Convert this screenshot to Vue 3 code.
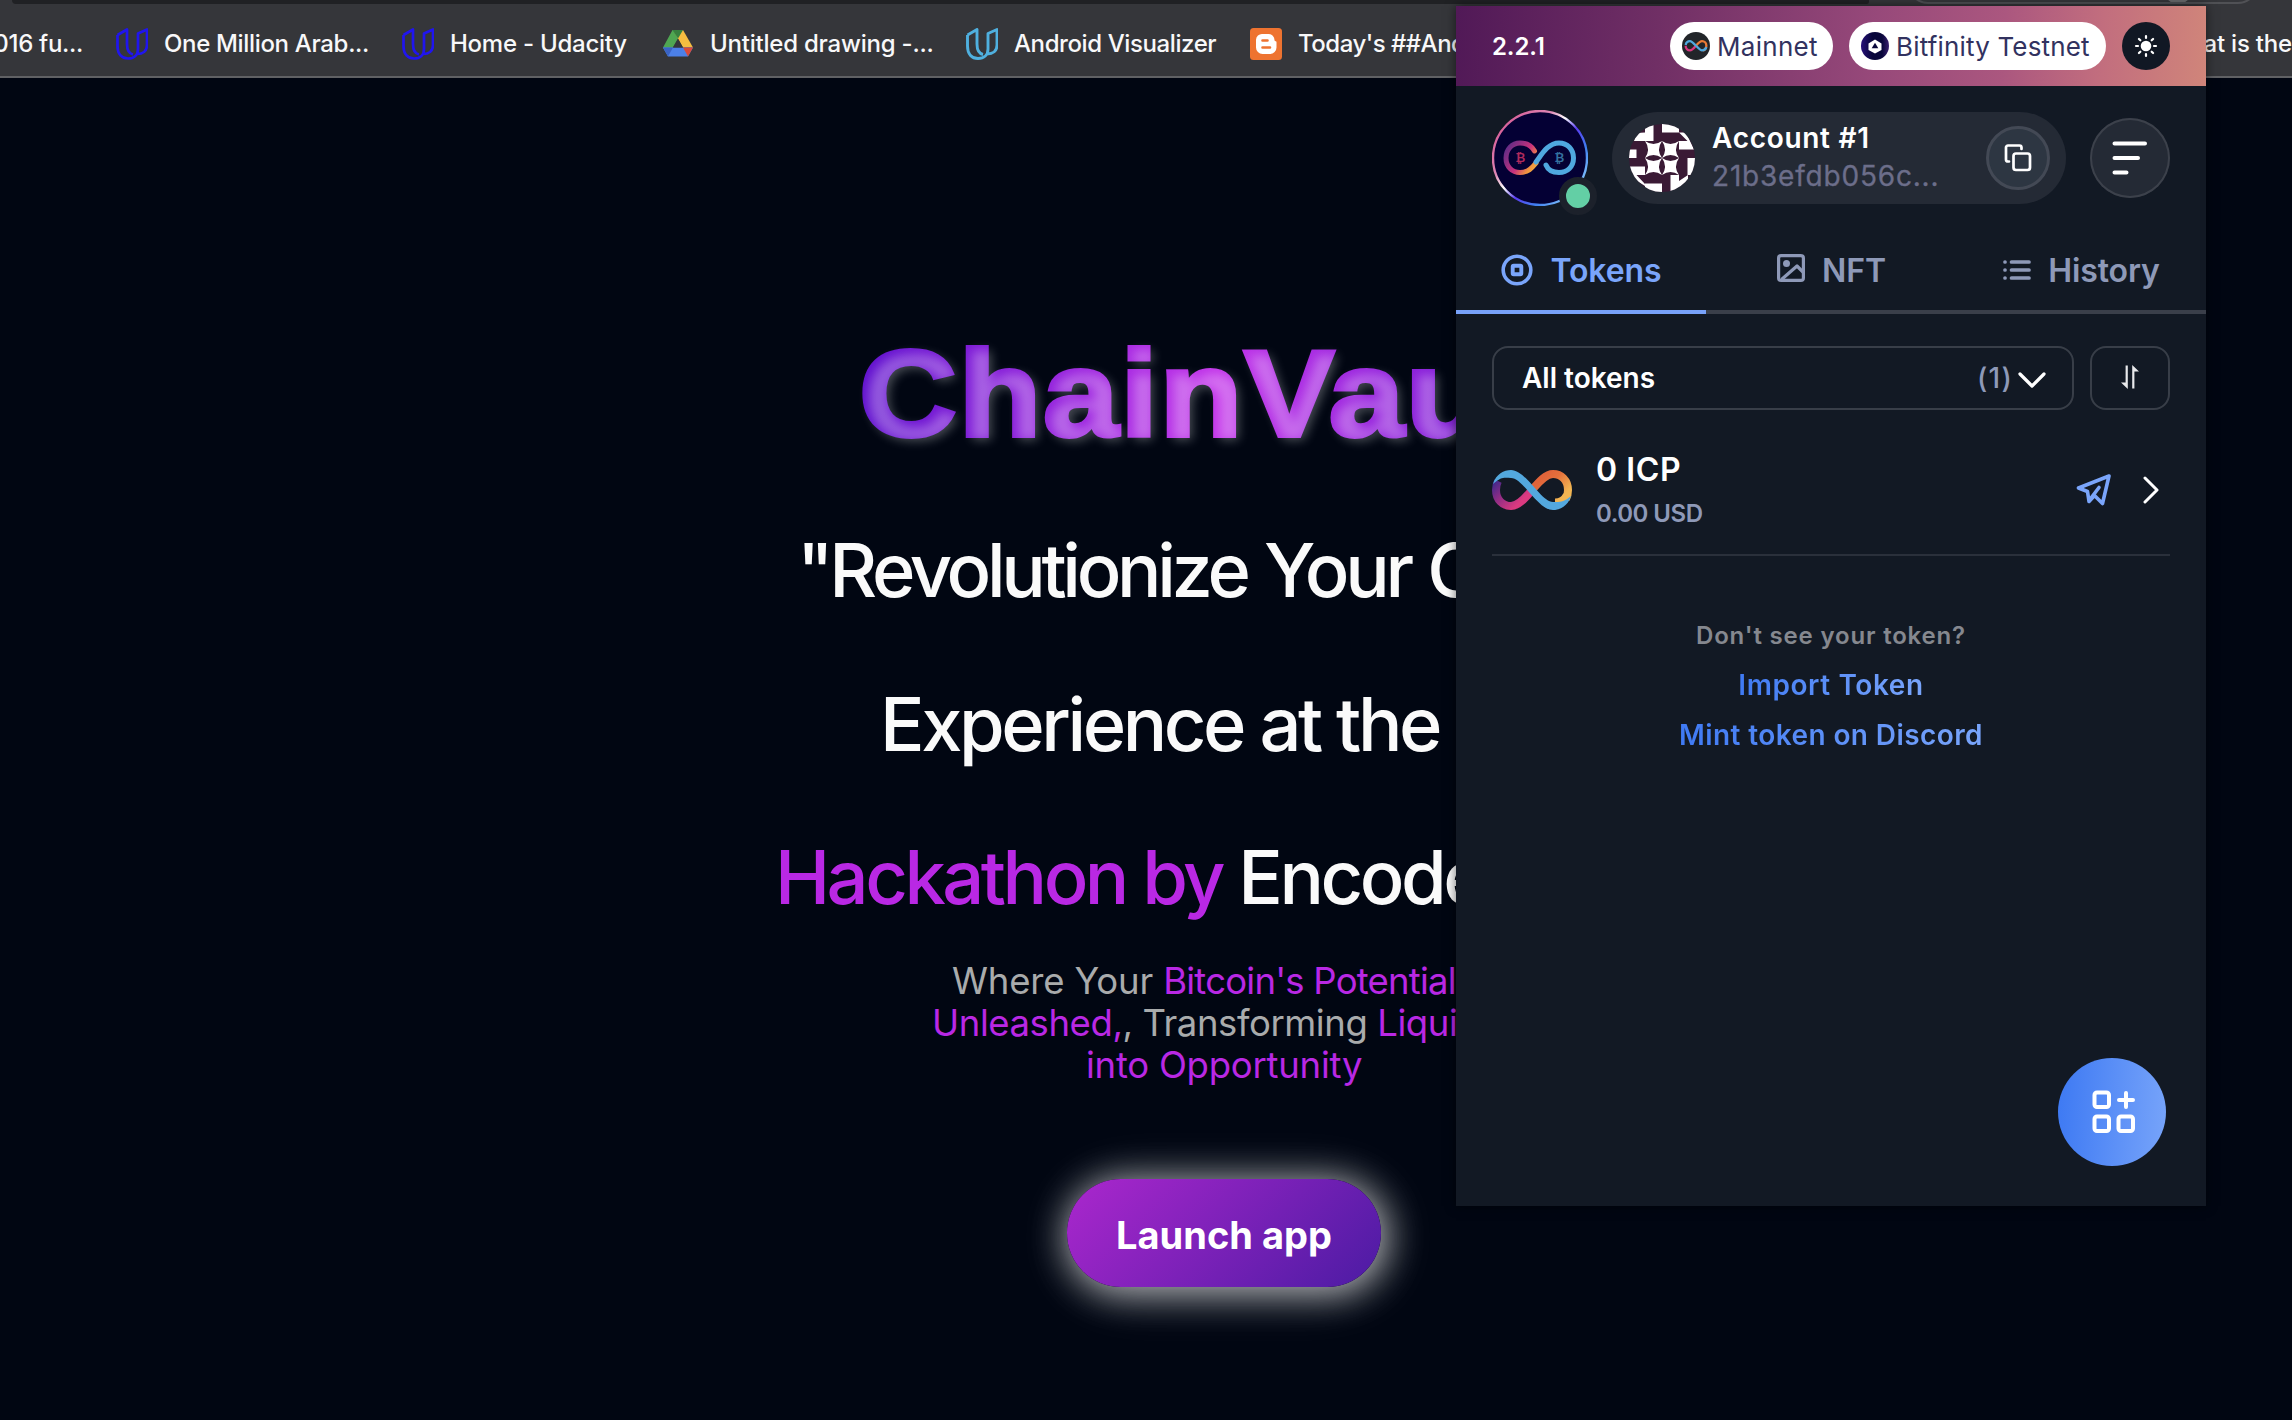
<script setup>
const stars = [[17, 17], [34, 17], [17, 34], [34, 34]]
const rays = [0, 45, 90, 135, 180, 225, 270, 315]
</script>

<template>
  <div class="screen">
    <nav class="bookmarks">
      <div class="tabstrip"></div>
      <div class="omnibox"><i></i></div>
      <div class="mark first"><span>016 fu...</span></div>
      <div class="mark m1">
        <svg class="ic" viewBox="0 0 32 32" fill="none" stroke="#2015ee" stroke-width="2.7" stroke-linejoin="round"><path d="M1.5 7 L11 1.5 V16 C11 22 12.5 25.5 17 26.5 M1.5 7 V18 C1.5 26.5 6 30.5 12 30.5 C18 30.5 22 27 22 21 V5.5 L31 1.5 V17 C31 23 27 26 21 26"/></svg>
        <span>One Million Arab...</span>
      </div>
      <div class="mark m2">
        <svg class="ic" viewBox="0 0 32 32" fill="none" stroke="#2015ee" stroke-width="2.7" stroke-linejoin="round"><path d="M1.5 7 L11 1.5 V16 C11 22 12.5 25.5 17 26.5 M1.5 7 V18 C1.5 26.5 6 30.5 12 30.5 C18 30.5 22 27 22 21 V5.5 L31 1.5 V17 C31 23 27 26 21 26"/></svg>
        <span>Home - Udacity</span>
      </div>
      <div class="mark m3">
        <svg class="drive" viewBox="0 0 30 27">
          <path d="M9.5 0 H20 L15 8.5 L5 26 L0 17.5 Z" fill="#4fa652"/>
          <path d="M20 0 L30 17.5 H20 L11 1.5 Z" fill="#f5bd41"/><path d="M9.5 0 H20 L15 8.5 Z" fill="#37803f"/>
          <path d="M0 17.5 H30 L25 26.5 H5 Z" fill="#4c80e8"/><path d="M20 17.5 H30 L25 26.5 Z" fill="#da4a3a"/><path d="M0 17.5 H10 L5 26.5 Z" fill="#3a63c4"/>
          <path d="M15 8.8 L20 17.5 H10 Z" fill="#35363a"/>
        </svg>
        <span>Untitled drawing -...</span>
      </div>
      <div class="mark m4">
        <svg class="ic" viewBox="0 0 32 32" fill="none" stroke="#4fb0df" stroke-width="2.9" stroke-linejoin="round"><path d="M1.5 7 L11 1.5 V16 C11 22 12.5 25.5 17 26.5 M1.5 7 V18 C1.5 26.5 6 30.5 12 30.5 C18 30.5 22 27 22 21 V5.5 L31 1.5 V17 C31 23 27 26 21 26"/></svg>
        <span>Android Visualizer</span>
      </div>
      <div class="mark m5">
        <svg class="ic" viewBox="0 0 32 32"><rect width="32" height="32" rx="3.5" fill="#ee7330"/><path d="M12.5 6 h6 a6 6 0 0 1 6 6 q0 1.3 1.3 1.3 q.7 0 .7 1 v5.200 a6.500 6.500 0 0 1 -6.500 6.500 h-7.500 a6.500 6.500 0 0 1 -6.500 -6.500 v-7.500 a6 6 0 0 1 6.500 -6z" fill="#fff"/><path d="M12.500 12.500 h5 M12.500 19.500 h7.500" stroke="#ee7330" stroke-width="2.600" stroke-linecap="round"/></svg>
        <span>Today's ##And</span>
      </div>
      <div class="mark last"><span>at is the</span></div>
    </nav>

    <main class="hero">
      <h1><span>ChainVault</span></h1>
      <div class="headline">
        <p class="h-a">"Revolutionize Your C</p>
        <p class="h-b">Experience at the</p>
        <p class="h-c"><em>Hackathon by</em> Encode</p>
      </div>
      <div class="lead">
        <p class="l-a">Where Your <em>Bitcoin's Potential</em></p>
        <p class="l-b"><em>Unleashed,</em>, Transforming <em>Liquid</em></p>
        <p class="l-c"><em>into Opportunity</em></p>
      </div>
      <button class="launch">Launch app</button>
    </main>

    <section class="wallet">
      <header class="net">
        <span class="ver">2.2.1</span>
        <span class="pill main">
          <svg viewBox="0 0 28 28"><circle cx="14" cy="14" r="14" fill="#222529"/><g fill="none" stroke-width="8" transform="translate(2.500 8) scale(.2875)"><path d="M4 20C4 30 11 36 19 36 26 36 34 27 40 20" stroke="#d8377f"/><path d="M40 20C46 13 54 4 61 4 69 4 76 10 76 20 76 30 69 36 64 36" stroke="#ea7a35"/><path d="M4 17C6 8 12 4 19 4 30 4 50 36 61 36 68 36 74 32 76 25" stroke="#4fa8df"/></g></svg>
          <span>Mainnet</span>
        </span>
        <span class="pill bit">
          <svg viewBox="0 0 28 28"><defs><linearGradient id="bt"><stop offset="0" stop-color="#27107a"/><stop offset=".4" stop-color="#08063a"/><stop offset=".75" stop-color="#08063a"/><stop offset="1" stop-color="#3a2070"/></linearGradient></defs><circle cx="14" cy="14" r="14" fill="url(#bt)"/><path d="M14 7.500 L20.500 11.500 V18 L14 21.500 L7.500 18 V11.500Z" fill="#fff"/><path d="M14 10.800 L17.300 16.300 H10.700Z" fill="#08063a"/></svg>
          <span>Bitfinity Testnet</span>
        </span>
        <span class="sun">
          <svg viewBox="0 0 48 48"><circle cx="24" cy="24" r="5.300" fill="#fff"/><path v-for="a in rays" :key="a" d="M24 14 V16" :transform="`rotate(${a} 24 24)`" stroke="#fff" stroke-width="2.200" stroke-linecap="round"/></svg>
        </span>
      </header>

      <div class="account-row">
        <div class="avatar">
          <svg viewBox="0 0 96 96">
            <defs>
              <linearGradient id="av" x1=".05" y1=".25" x2=".85" y2=".95"><stop offset="0" stop-color="#d8649c"/><stop offset=".25" stop-color="#dd86b4"/><stop offset=".4" stop-color="#fff"/><stop offset=".55" stop-color="#5a3bf0"/><stop offset=".75" stop-color="#3f7ff0"/><stop offset="1" stop-color="#8fd0ff"/></linearGradient>
              <linearGradient id="al" gradientUnits="userSpaceOnUse" x1="13" y1="36" x2="46" y2="58"><stop offset="0" stop-color="#5a2b86"/><stop offset=".55" stop-color="#c9327c"/><stop offset=".82" stop-color="#f0933f"/><stop offset="1" stop-color="#f4b23f"/></linearGradient>
            </defs>
            <circle cx="48" cy="48" r="47" fill="#040034" stroke="url(#av)" stroke-width="2.400"/>
            <g fill="none" stroke-width="5" stroke-linecap="round">
              <path d="M42.500 41 C39 34.500 34 33 28 33 C20 33 14 39.500 14 48 C14 56.500 20 62.500 28 62.500 C36 62.500 40 58 44 53" stroke="url(#al)"/>
              <path d="M44 52 C50 44 56 33 67 33 C75.500 33 81.500 39.500 81.500 48 C81.500 56.500 75.500 62.500 67 62.500 C60 62.500 56 60 54 55" stroke="#4fa8df"/>
            </g>
            <text x="28.500" y="51.800" class="coin" fill="#b02a5c">₿</text><text x="67.500" y="51.800" class="coin" fill="#34709e">₿</text>
          </svg>
          <i class="dot"></i>
        </div>
        <div class="account">
          <svg class="ident" viewBox="0 0 68 68">
            <clipPath id="cc"><ellipse cx="34" cy="34" rx="33" ry="34"/></clipPath>
            <g clip-path="url(#cc)">
              <rect width="68" height="68" fill="#3a1a35"/>
              <path fill="#fff" d="M17 0H25.500V17H6L8.500 9 17 8.500ZM34 0H51V8.500H34ZM51 8.500 58 8.500 66 25.500H51V17H59.500ZM59.500 34H68V51H59.500ZM42.500 51H51V57L60 51V62L48 68H42.500ZM17 59.500H34V68H17ZM0 42.500H17V51H8.500L17 60V62L0 51ZM0 25.500H8.500V34H0Z"/>
              <path v-for="([x, y], i) in stars" :key="i" fill="#fff" :transform="`translate(${x} ${y})`" d="M0 0 Q8.500 6 17 0 Q11 8.500 17 17 Q8.500 11 0 17 Q6 8.500 0 0Z"/>
            </g>
          </svg>
          <div class="who"><b>Account #1</b><span>21b3efdb056c...</span></div>
          <span class="copy">
            <svg viewBox="0 0 30 30" fill="none" stroke="#fff" stroke-width="2.700" stroke-linejoin="round" stroke-linecap="round"><rect x="10.500" y="10.500" width="16.500" height="16.500" rx="2.500"/><path d="M6 18.500 H5 a2 2 0 0 1 -2 -2 V4.500 a2 2 0 0 1 2 -2 H16.500 a2 2 0 0 1 2 2 V6"/></svg>
          </span>
        </div>
        <span class="menu"><svg viewBox="0 0 80 80" stroke="#fff" stroke-width="4" stroke-linecap="round"><path d="M24.500 25.500 H55 M24.500 40 H48 M24.500 54.500 H36.500"/></svg></span>
      </div>

      <div class="tabs">
        <div class="tab on">
          <svg class="t1" viewBox="0 0 32 32" fill="none" stroke="currentColor"><circle cx="16" cy="16" r="13.800" stroke-width="3.600"/><rect x="11.700" y="11.700" width="8.600" height="8.600" rx="1" stroke-width="3.900"/></svg>
          <span>Tokens</span>
        </div>
        <div class="tab">
          <svg class="t2" viewBox="0 0 28 28" fill="none" stroke="currentColor" stroke-width="3.200" stroke-linejoin="round"><rect x="1.600" y="1.600" width="24.800" height="24.800" rx="2.500"/><circle cx="9.500" cy="9.500" r="3.500" fill="currentColor" stroke="none"/><path d="M4.500 25.500 L20 12 L26 18"/></svg>
          <span>NFT</span>
        </div>
        <div class="tab">
          <svg class="t3" viewBox="0 0 28 22" stroke="currentColor" stroke-width="3.700" stroke-linecap="round"><path d="M8.500 3 H26 M8.500 11 H26 M8.500 19 H26"/><path d="M2 3 h.01 M2 11 h.01 M2 19 h.01"/></svg>
          <span>History</span>
        </div>
      </div>

      <div class="filters">
        <div class="select">
          <b>All tokens</b>
          <span class="count">(1)</span>
          <svg viewBox="0 0 28 16" fill="none" stroke="#fff" stroke-width="3.200" stroke-linecap="round" stroke-linejoin="round"><path d="M2 2 L14 14 L26 2"/></svg>
        </div>
        <div class="sort"><svg viewBox="0 0 18 24" fill="#e8e9eb"><path d="M4.600 .5 H6.800 V24 L0 17.500 H4.600Z M11.200 23.500 H13.400 V6.500 H18 L11.200 0Z"/></svg></div>
      </div>

      <div class="token">
        <svg class="icp" viewBox="0 0 80 40" fill="none" stroke-width="8">
          <defs>
            <linearGradient id="g1" gradientUnits="userSpaceOnUse" x1="4" y1="12" x2="26" y2="34"><stop offset="0" stop-color="#48298a"/><stop offset=".4" stop-color="#8b2c85"/><stop offset="1" stop-color="#db3a80"/></linearGradient>
            <linearGradient id="g2" gradientUnits="userSpaceOnUse" x1="52" y1="6" x2="76" y2="30"><stop offset="0" stop-color="#e1643a"/><stop offset=".3" stop-color="#e5713c"/><stop offset=".8" stop-color="#f2b552"/></linearGradient>
          </defs>
          <path d="M6 11C4 15 4 18 4 20 4 30 11 36 19 36 27 36 34 27 40 20" stroke="url(#g1)"/>
          <path d="M40 20C46 13 53 4 61 4 69 4 76 10 76 20 76 25 75 27 74 29" stroke="url(#g2)"/>
          <path d="M63 32.500C70 32.500 73 29 75 25" stroke="url(#g2)"/>
          <path d="M1 14C4 4 12 0 19 0 34 0 49 32 61 32 67 32 71 33 79 26 76 36 68 40 61 40 46 40 31 8 19 8 13 8 10 6 1 14Z" fill="#53a8de"/>
        </svg>
        <div class="amount"><b>0 ICP</b><span>0.00 USD</span></div>
        <svg class="send" viewBox="0 0 36 32" fill="none" stroke="#7aa5fb" stroke-width="3.600" stroke-linejoin="round" stroke-linecap="round"><path d="M33 2 L2.500 14 L11.500 17.500 L13 27.500 L18.500 21.500 L26.500 29.500 Z"/><path d="M23 13.500 L13.500 26"/></svg>
        <svg class="go" viewBox="0 0 16 28" fill="none" stroke="#fff" stroke-width="3" stroke-linecap="round" stroke-linejoin="round"><path d="M2 2 L14 14 L2 26"/></svg>
      </div>

      <div class="more">
        <span class="ask">Don't see your token?</span>
        <a>Import Token</a>
        <a class="mint">Mint token on Discord</a>
      </div>

      <div class="fab"><svg viewBox="0 0 44 44" fill="none" stroke="#fff" stroke-width="4" stroke-linecap="round"><rect x="2.500" y="2.500" width="14.500" height="14.500" rx="2.500"/><rect x="2.500" y="26.500" width="14.500" height="14.500" rx="2.500"/><rect x="26.500" y="26.500" width="14.500" height="14.500" rx="2.500"/><path d="M34 3 V17 M27 10 H41"/></svg></div>
    </section>
  </div>
</template>

<style>
body { margin: 0; background: #010612; overflow: hidden; }
</style>
<style scoped>
.screen { position: relative; width: 2292px; height: 1420px; overflow: hidden; background: #010612; font-family: Inter, sans-serif; }
.screen * { box-sizing: border-box; }
svg { display: block; flex: none; }
em { font-style: normal; color: #b928e4; }
p, h1 { margin: 0; white-space: nowrap; }

.bookmarks { position: relative; height: 78px; background: #35363a; border-bottom: 2px solid #606164; display: grid; grid-template-columns: 116px 286px 261px 303px 284px 1fr 100px; align-items: center; padding-top: 11px; color: #f8f8f9; font-size: 24px; font-weight: 500; white-space: nowrap; }
.tabstrip { position: absolute; left: 12px; top: 0; width: 1857px; height: 4px; background: #202124; border-radius: 0 0 8px 14px; }
.omnibox { position: absolute; left: 1908px; top: -36px; width: 350px; height: 40px; border: 2px solid #505155; border-radius: 20px; overflow: hidden; }
.omnibox i { position: absolute; left: 254px; bottom: -2px; width: 28px; height: 28px; border-radius: 50%; background: #67686b; }
.mark { display: flex; align-items: center; height: 32px; line-height: 32px; }
.ic { width: 32px; height: 32px; margin-right: 16px; }
.first { justify-content: flex-end; padding-right: 33px; letter-spacing: -.3px; }
.m1 span { letter-spacing: -.33px; }
.m2 span { letter-spacing: -.25px; }
.m3 span { letter-spacing: -.22px; }
.m4 span { letter-spacing: -.4px; }
.m5 span { letter-spacing: -.5px; }
.drive { width: 30px; height: 27px; margin-right: 17px; }
.last { justify-content: flex-end; letter-spacing: -.2px; }

.hero { padding-top: 216px; color: #fafafa; }
h1 { margin-left: 859px; height: 200px; line-height: 200px; font-family: "Liberation Sans", sans-serif; font-size: 122px; font-weight: 700; }
h1 span { display: inline-block; letter-spacing: 1.6px; transform: scaleX(1.11); transform-origin: 0 50%; background: linear-gradient(90deg, #5f0fce, #c334ea 50%, #5f0fce); -webkit-background-clip: text; background-clip: text; color: transparent; -webkit-text-stroke: 4px transparent; text-shadow: 4px 4px 10px rgba(255, 255, 255, .3); }
.headline { font-size: 74px; font-weight: 500; line-height: 153.6px; }
.h-a { padding-left: 797px; letter-spacing: -4.3px; word-spacing: 2px; }
.h-b { padding-left: 880px; letter-spacing: -3.43px; }
.h-c { padding-left: 775px; letter-spacing: -3.48px; }
.lead { margin-top: 5px; font-size: 36.5px; line-height: 42.2px; color: #a9abac; }
.l-a { padding-left: 952px; letter-spacing: -.16px; }
.l-a em { letter-spacing: -.78px; }
.l-b { padding-left: 932px; letter-spacing: -.42px; }
.l-c { padding-left: 1086px; letter-spacing: -.24px; }
.launch { display: block; margin: 93px 0 0 1067px; width: 314px; height: 108px; padding: 4px 0 0; border: 0; border-radius: 54px; background: linear-gradient(135deg, #ab27cd, #4b1ba3); color: #fff; font: 700 38px Inter, sans-serif; box-shadow: 4px 4px 60px rgba(255, 255, 255, .2), 3px 4px 36px 3px rgba(255, 255, 255, .65); }

.wallet { position: absolute; left: 1456px; top: 6px; width: 750px; height: 1200px; background: #121924; box-shadow: 0 0 10px rgba(0, 0, 0, .55); }
.net { height: 80px; padding: 0 36px; display: flex; align-items: center; background: linear-gradient(93deg, #511957, #702f65 27%, #97497a 56%, #ab577f 73%, #c26e7e 86%, #d0857a); color: #fff; }
.ver { font-size: 24px; font-weight: 600; letter-spacing: -.1px; margin-right: auto; }
.pill { display: flex; align-items: center; height: 48px; border-radius: 24px; background: #fff; color: #32325f; font-size: 26px; padding-left: 12px; gap: 7px; white-space: nowrap; }
.pill svg { width: 28px; height: 28px; }
.main { width: 163px; letter-spacing: .29px; margin-right: 16px; }
.bit { width: 257px; letter-spacing: .17px; margin-right: 16px; }
.sun { width: 48px; height: 48px; border-radius: 50%; background: #111824; }
.account-row { display: flex; align-items: center; padding: 24px 36px 0; gap: 24px; }
.avatar { position: relative; width: 96px; height: 96px; }
.coin { font: 700 12px "DejaVu Sans", sans-serif; text-anchor: middle; }
.dot { position: absolute; left: 67px; top: 67px; width: 38px; height: 38px; border-radius: 50%; border: 7px solid #1c212b; background: #63cfa5; }
.account { width: 454px; height: 92px; border-radius: 46px; background: #242a35; display: flex; align-items: center; padding: 0 16px; }
.ident { width: 68px; height: 68px; }
.who { display: flex; flex-direction: column; margin: 0 auto 2px 16px; font-size: 28px; line-height: 38px; color: #fff; }
.who b { font-weight: 600; letter-spacing: .7px; }
.who span { color: #6c6e8a; letter-spacing: .8px; -webkit-text-stroke: .3px #6c6e8a; }
.copy { width: 64px; height: 64px; border-radius: 50%; border: 3px solid #434955; background: #2d3642; display: flex; align-items: center; justify-content: center; }
.copy svg { width: 30px; height: 30px; }
.menu { width: 80px; height: 80px; border-radius: 50%; background: #242a35; box-shadow: inset 0 0 0 2px #3c414b; }
.tabs { display: flex; margin-top: 24px; }
.tab { width: 250px; height: 84px; border-bottom: 4px solid #3a3f4a; display: flex; align-items: center; justify-content: center; gap: 17px; font-size: 32px; font-weight: 600; color: #8e99b8; padding-left: 1px; }
.tab.on { color: #7aa5fb; border-color: #78a2fa; }
.tab span { letter-spacing: -.1px; }
.t1 { width: 32px; height: 32px; }
.t2 { width: 28px; height: 28px; margin-top: -4px; }
.t3 { width: 28px; height: 22px; }
.filters { display: flex; gap: 16px; padding: 32px 36px 0; }
.select, .sort { height: 64px; border: 2px solid #383e48; border-radius: 16px; display: flex; align-items: center; }
.select { width: 582px; padding: 0 26px 0 28px; font-size: 28px; color: #fff; }
.select b { font-weight: 600; margin-right: auto; }
.count { font-weight: 500; color: #8e99b8; letter-spacing: 1.2px; margin-right: 5px; }
.select svg { width: 28px; height: 16px; margin-top: 3px; }
.sort { width: 80px; justify-content: center; }
.sort svg { width: 18px; height: 24px; margin-top: -2px; }
.token { display: flex; align-items: center; height: 130px; margin: 16px 36px 0; border-bottom: 2px solid #2a303b; }
.icp { width: 80px; height: 40px; }
.amount { display: flex; flex-direction: column; margin: 3px auto 0 24px; line-height: 44px; }
.amount b { font-size: 32px; font-weight: 600; color: #fff; letter-spacing: .6px; }
.amount span { font-size: 24px; font-weight: 600; color: #8e99b8; letter-spacing: -.5px; }
.send { width: 36px; height: 32px; margin-right: 31px; }
.go { width: 16px; height: 28px; margin-right: 11px; }
.more { display: flex; flex-direction: column; align-items: center; margin-top: 54px; line-height: 50px; font-size: 28px; font-weight: 600; }
.ask { font-size: 24px; color: #85888f; letter-spacing: .82px; position: relative; top: 1px; }
.more a { letter-spacing: .58px; background: linear-gradient(90deg, #3f7af4, #79a5fb); -webkit-background-clip: text; background-clip: text; color: transparent; }
.more .mint { letter-spacing: .4px; }
.fab { position: absolute; right: 40px; bottom: 40px; width: 108px; height: 108px; border-radius: 50%; background: linear-gradient(93deg, #3d79f3, #77a4fa); display: flex; align-items: center; justify-content: center; padding-left: 4px; }
.fab svg { width: 44px; height: 44px; }
</style>
